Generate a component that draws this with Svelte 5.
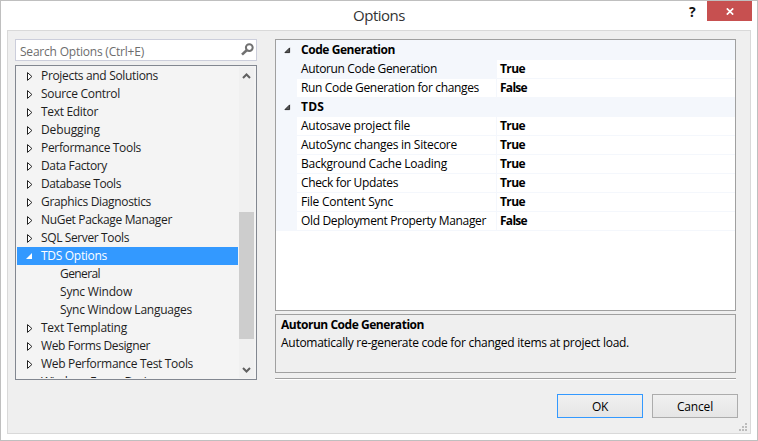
<script>
  const tree = [
    { label: 'Projects and Solutions', w: 117 },
    { label: 'Source Control', w: 79 },
    { label: 'Text Editor', w: 57 },
    { label: 'Debugging', w: 59 },
    { label: 'Performance Tools', w: 100 },
    { label: 'Data Factory', w: 66 },
    { label: 'Database Tools', w: 80 },
    { label: 'Graphics Diagnostics', w: 110 },
    { label: 'NuGet Package Manager', w: 131 },
    { label: 'SQL Server Tools', w: 88 },
    { label: 'TDS Options', w: 66, open: true },
    { label: 'General', w: 40, child: true },
    { label: 'Sync Window', w: 72, child: true },
    { label: 'Sync Window Languages', w: 132, child: true },
    { label: 'Text Templating', w: 86 },
    { label: 'Web Forms Designer', w: 109 },
    { label: 'Web Performance Test Tools', w: 152 },
    { label: 'Windows Forms Designer', w: 128 }
  ];

  const grid = [
    { group: 'Code Generation', w: 94 },
    { name: 'Autorun Code Generation', w: 136, value: 'True', current: true },
    { name: 'Run Code Generation for changes', w: 178, value: 'False' },
    { group: 'TDS', w: 23 },
    { name: 'Autosave project file', w: 109, value: 'True' },
    { name: 'AutoSync changes in Sitecore', w: 156, value: 'True' },
    { name: 'Background Cache Loading', w: 146, value: 'True' },
    { name: 'Check for Updates', w: 97, value: 'True' },
    { name: 'File Content Sync', w: 92, value: 'True' },
    { name: 'Old Deployment Property Manager', w: 185, value: 'False' }
  ];

  // Spreads the letters so that a label takes the given width.
  function fit(node, width) {
    const natural = node.getBoundingClientRect().width;
    node.style.letterSpacing = (width - natural) / node.textContent.length + 'px';
  }
</script>

<div class="window">
  <header>
    <h1><span use:fit={52}>Options</span></h1>
    <span class="help">?</span>
    <button class="close" aria-label="Close">
      <svg width="8" height="7" viewBox="0 0 8 7"><path d="M.8 .4 7.2 6.6M7.2 .4 .8 6.6" stroke="#fff" stroke-width="1.7" /></svg>
    </button>
  </header>

  <main>
    <section class="left">
      <div class="search">
        <span use:fit={124}>Search Options (Ctrl+E)</span>
        <svg width="13" height="13" viewBox="0 0 13 13" fill="none" stroke="#717171">
          <circle cx="8.3" cy="4.6" r="3.4" stroke-width="2" />
          <path d="M5.7 7.2 1 11.6" stroke-width="2.6" />
        </svg>
      </div>
      <div class="tree">
        <ul>
          {#each tree as item}
            <li class:selected={item.open} class:child={item.child}>
              {#if item.open}
                <svg width="7" height="7" viewBox="0 0 7 7"><path d="M6 0V6H0Z" fill="#fff" /></svg>
              {:else if !item.child}
                <svg width="6" height="9" viewBox="0 0 6 9"><path d="M.5 .6V8.4L4.9 4.5Z" fill="#fff" stroke="#222" /></svg>
              {/if}
              <span use:fit={item.w}>{item.label}</span>
            </li>
          {/each}
        </ul>
        <div class="scroll">
          <svg width="9" height="6" viewBox="0 0 9 6"><path d="M1 5 4.5 1.5 8 5" fill="none" stroke="#606060" stroke-width="2" /></svg>
          <div class="thumb"></div>
          <svg width="9" height="6" viewBox="0 0 9 6"><path d="M1 1 4.5 4.5 8 1" fill="none" stroke="#606060" stroke-width="2" /></svg>
        </div>
      </div>
    </section>

    <section class="right">
      <div class="grid">
        {#each grid as row}
          {#if row.group}
            <div class="row group">
              <svg width="7" height="7" viewBox="0 0 7 7"><path d="M5.6 .9V5.6H.9Z" fill="#555" stroke="#222" stroke-width=".9" /></svg>
              <b use:fit={row.w}>{row.group}</b>
            </div>
          {:else}
            <div class="row">
              <div class="name" class:current={row.current}><span use:fit={row.w}>{row.name}</span></div>
              <div class="value"><b use:fit={row.value === 'True' ? 25 : 27}>{row.value}</b></div>
            </div>
          {/if}
        {/each}
      </div>
      <div class="description">
        <b use:fit={143}>Autorun Code Generation</b>
        <p><span use:fit={348}>Automatically re-generate code for changed items at project load.</span></p>
      </div>
      <div class="rule"></div>
      <div class="buttons">
        <button class="ok"><span use:fit={16}>OK</span></button>
        <button><span use:fit={36}>Cancel</span></button>
      </div>
    </section>
    <svg class="grip" width="8" height="8" viewBox="0 0 8 8" fill="#bcbcbc">
      <path d="M6 0h2v2H6zM3 3h2v2H3zM6 3h2v2H6zM0 6h2v2H0zM3 6h2v2H3zM6 6h2v2H6z" />
    </svg>
  </main>
</div>

<style>
  .window {
    box-sizing: border-box;
    width: 758px;
    height: 441px;
    border: 1px solid #bfbfbf;
    background: #fff;
    padding: 0 6px 6px;
    font: 12px/18px 'Open Sans', 'Noto Sans', sans-serif;
    color: #1e1e1e;
    display: flex;
    flex-direction: column;
    overflow: hidden;
  }
  svg { display: block; flex: none; }
  span, b { white-space: nowrap; }
  header {
    height: 29px;
    flex: none;
    display: flex;
    align-items: flex-start;
  }
  h1 {
    flex: 1;
    margin: 0;
    padding-left: 346px;
    font-size: 15px;
    font-weight: 400;
    line-height: 29px;
    color: #333;
  }
  .help {
    width: 17px;
    margin-right: 1px;
    font-size: 14px;
    font-weight: 700;
    line-height: 21px;
    color: #111;
  }
  .close {
    width: 45px;
    height: 20px;
    border: 0;
    padding: 1px 0 0 1px;
    background: #c75050;
    display: flex;
    align-items: center;
    justify-content: center;
    margin-right: -1px;
  }
  main {
    position: relative;
    box-sizing: border-box;
    height: 404px;
    border: 1px solid #d9d9d9;
    background: #efefef;
    display: flex;
    padding: 8px 0 0 7px;
    gap: 18px;
  }
  .left { width: 242px; }
  .search {
    box-sizing: border-box;
    height: 22px;
    border: 1px solid #cccedb;
    background: #fff;
    color: #6d6d6d;
    display: flex;
    justify-content: space-between;
    align-items: flex-start;
    padding: 3px 2px 0 4px;
    line-height: 17px;
  }
  .tree {
    box-sizing: border-box;
    margin-top: 4px;
    height: 315px;
    border: 1px solid #828790;
    background: #f4f4f4;
    padding: 1px;
    display: flex;
    gap: 1px;
    overflow: hidden;
  }
  ul {
    list-style: none;
    margin: 0;
    padding: 0;
    width: 221px;
    overflow: hidden;
  }
  li {
    height: 18px;
    display: flex;
    align-items: center;
    padding-left: 10px;
    box-sizing: border-box;
  }
  li svg[width='6'] { margin-right: 8px; }
  li svg[width='7'] { margin: 1px 8px 0 -1px; }
  li.child { padding-left: 43px; }
  li.selected { background: #3399ff; color: #fff; }
  .scroll {
    width: 15px;
    background: #f0f0f0;
    display: flex;
    flex-direction: column;
    align-items: center;
    padding: 6px 0 5px;
    box-sizing: border-box;
  }
  .thumb {
    width: 15px;
    height: 127px;
    background: #cdcdcd;
    margin: 133px 0 auto;
  }
  .right { width: 461px; color: #000; }
  .grid {
    box-sizing: border-box;
    height: 272px;
    border: 1px solid #a0a0a0;
    background: #fff;
  }
  .row {
    height: 19px;
    box-sizing: border-box;
    border-left: 21px solid #f4f7fc;
    border-bottom: 1px solid #f4f7fc;
    display: flex;
    line-height: 18px;
  }
  .row.group {
    border-left: 0;
    background: #f4f7fc;
    padding-left: 8px;
    align-items: center;
    gap: 10px;
  }
  .grid > .row:first-child { height: 20px; padding-top: 1px; }
  .name {
    width: 200px;
    box-sizing: border-box;
    padding-left: 4px;
    border-right: 1px solid #f4f7fc;
  }
  .name.current { background: #f4f7fc; }
  .value { padding-left: 3px; }
  .description {
    box-sizing: border-box;
    height: 59px;
    margin-top: 3px;
    border: 1px solid #a0a0a0;
    padding: 1px 5px;
  }
  .description b { display: block; width: max-content; }
  .description p { margin: 0; }
  .rule {
    margin-top: 5px;
    height: 1px;
    background: #a0a0a0;
    border-bottom: 1px solid #fff;
  }
  .buttons {
    display: flex;
    gap: 9px;
    margin: 14px -2px 0 282px;
  }
  .buttons button {
    box-sizing: border-box;
    width: 86px;
    height: 24px;
    padding: 0;
    border: 1px solid #acacac;
    background: linear-gradient(#f0f0f0, #e5e5e5);
    font: inherit;
    line-height: 21px;
    color: #000;
  }
  .buttons .ok { border-color: #3399ff; }
  .grip {
    position: absolute;
    right: 3px;
    bottom: 2px;
  }
</style>
